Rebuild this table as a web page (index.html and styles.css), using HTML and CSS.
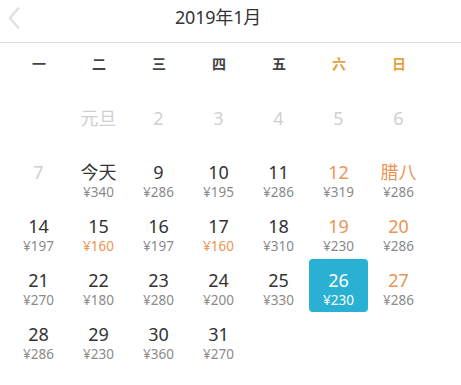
FILE: index.html
```html
<!DOCTYPE html>
<html lang="zh-CN">
<head>
<meta charset="utf-8">
<title>2019年1月</title>
<link rel="stylesheet" href="styles.css">
</head>
<body>
<div class="page">
  <header class="head">
    <div class="head-inner">
      <span class="back"><svg width="14" height="24" viewBox="0 0 14 24"><path d="M12 1.5 L3 12 L12 22.5" fill="none" stroke="#e0e0e0" stroke-width="2.4"/></svg></span>
      <h1 class="title">2019年1月</h1>
      <span></span>
    </div>
  </header>
  <div class="cal">
    <div class="weekdays">
      <span>一</span><span>二</span><span>三</span><span>四</span><span>五</span><span class="wk">六</span><span class="wk">日</span>
    </div>
    <div class="days">
      <div class="day"></div>
      <div class="day off"><span class="d">元旦</span></div>
      <div class="day off"><span class="d">2</span></div>
      <div class="day off"><span class="d">3</span></div>
      <div class="day off"><span class="d">4</span></div>
      <div class="day off"><span class="d">5</span></div>
      <div class="day off"><span class="d">6</span></div>

      <div class="day off"><span class="d">7</span></div>
      <div class="day"><span class="d">今天</span><span class="p">¥340</span></div>
      <div class="day"><span class="d">9</span><span class="p">¥286</span></div>
      <div class="day"><span class="d">10</span><span class="p">¥195</span></div>
      <div class="day"><span class="d">11</span><span class="p">¥286</span></div>
      <div class="day we"><span class="d">12</span><span class="p">¥319</span></div>
      <div class="day we"><span class="d">腊八</span><span class="p">¥286</span></div>

      <div class="day"><span class="d">14</span><span class="p">¥197</span></div>
      <div class="day"><span class="d">15</span><span class="p low">¥160</span></div>
      <div class="day"><span class="d">16</span><span class="p">¥197</span></div>
      <div class="day"><span class="d">17</span><span class="p low">¥160</span></div>
      <div class="day"><span class="d">18</span><span class="p">¥310</span></div>
      <div class="day we"><span class="d">19</span><span class="p">¥230</span></div>
      <div class="day we"><span class="d">20</span><span class="p">¥286</span></div>

      <div class="day"><span class="d">21</span><span class="p">¥270</span></div>
      <div class="day"><span class="d">22</span><span class="p">¥180</span></div>
      <div class="day"><span class="d">23</span><span class="p">¥280</span></div>
      <div class="day"><span class="d">24</span><span class="p">¥200</span></div>
      <div class="day"><span class="d">25</span><span class="p">¥330</span></div>
      <div class="day sel"><span class="d">26</span><span class="p">¥230</span></div>
      <div class="day we"><span class="d">27</span><span class="p">¥286</span></div>

      <div class="day"><span class="d">28</span><span class="p">¥286</span></div>
      <div class="day"><span class="d">29</span><span class="p">¥230</span></div>
      <div class="day"><span class="d">30</span><span class="p">¥360</span></div>
      <div class="day"><span class="d">31</span><span class="p">¥270</span></div>
    </div>
  </div>
</div>
</body>
</html>
```

FILE: styles.css
```css
* { box-sizing: border-box; }
html, body { margin: 0; padding: 0; background: #fff; }
body {
  font-family: "Noto Sans", "Noto Sans CJK SC", sans-serif;
  color: #333;
}
.page { width: 461px; height: 385px; overflow: hidden; }
.head {
  height: 43px;
  border-bottom: 1px solid #dedede;
}
.head-inner {
  width: 420px;
  margin-left: 7px;
  height: 42px;
  display: grid;
  grid-template-columns: 1fr auto 1fr;
  align-items: center;
}
.back { display: flex; align-items: center; height: 42px; padding-bottom: 6px; }
.title {
  margin: 0 0 0 2px;
  font-size: 18px;
  font-weight: 400;
  color: #333;
  line-height: 22px;
  padding-bottom: 8px;
  letter-spacing: -0.2px;
}
.cal { width: 420px; margin-left: 9px; }
.weekdays {
  display: grid;
  grid-template-columns: repeat(7, 60px);
  height: 40px;
  align-items: center;
  margin-bottom: 14px;
  font-size: 14px;
  font-weight: 700;
  color: #444;
  text-align: center;
}
.weekdays .wk { color: #e5a03a; }
.days {
  display: grid;
  grid-template-columns: repeat(7, 60px);
  grid-auto-rows: 54px;
}
.day {
  width: 59px;
  height: 53px;
  display: flex;
  flex-direction: column;
  align-items: center;
  padding-top: 10px;
  border-radius: 4px;
}
.d {
  font-size: 18px;
  line-height: 22px;
  color: #333;
}
.p {
  font-size: 13.5px;
  line-height: 18px;
  color: #8a8a8a;
}
.off .d { color: #cfcfcf; }
.we .d { color: #ea9553; }
.p.low { color: #ef9450; }
.sel { background: #29b0d2; }
.sel .d, .sel .p { color: #fff; }
```
